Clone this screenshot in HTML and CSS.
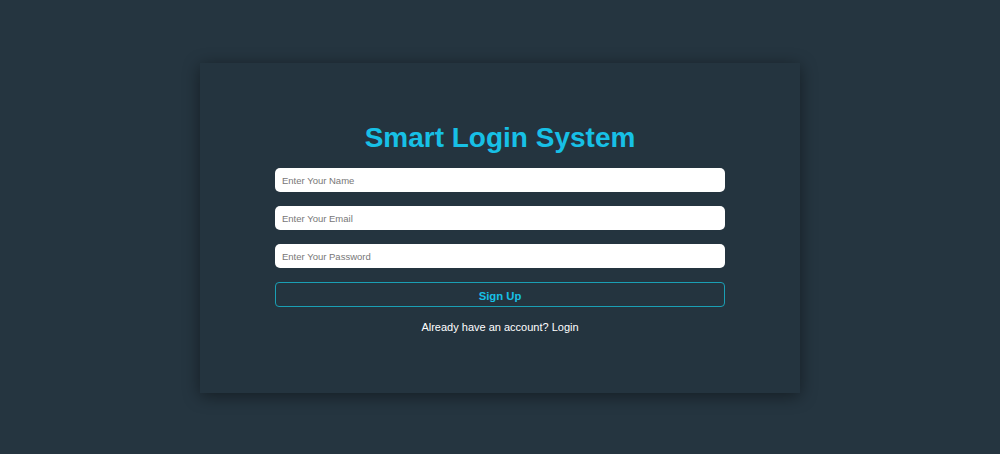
FILE: index.html
```
<!DOCTYPE html>
<html>
<head>
<meta charset="utf-8">
<link rel="stylesheet" href="styles.css">
</head>
<body>
<div class="page">
  <div class="card">
    <div class="form">
      <h1 class="title">Smart Login System</h1>
      <input class="field" type="text" placeholder="Enter Your Name">
      <input class="field" type="email" placeholder="Enter Your Email">
      <input class="field" type="password" placeholder="Enter Your Password">
      <button class="btn">Sign Up</button>
      <p class="note">Already have an account? Login</p>
    </div>
  </div>
</div>
</body>
</html>
```
FILE: styles.css
```
html, body {
  margin: 0;
  padding: 0;
}
body {
  background: #253540;
  font-family: "Liberation Sans", Arial, sans-serif;
}
.page {
  height: 454px;
  display: flex;
  align-items: center;
  justify-content: center;
}
.card {
  width: 600px;
  height: 330px;
  margin-top: 2px;
  background: #24343f;
  box-shadow: 0 3px 16px rgba(0, 0, 0, 0.45);
  display: flex;
  align-items: center;
  justify-content: center;
}
.form {
  width: 450px;
  display: flex;
  flex-direction: column;
}
.title {
  margin: 0 0 13px;
  text-align: center;
  color: #17c0e6;
  font-size: 28px;
  font-weight: bold;
  line-height: 34px;
}
.field {
  box-sizing: border-box;
  height: 24px;
  margin: 0 0 14px;
  padding: 0 7px;
  border: none;
  border-radius: 5px;
  background: #fff;
  font-family: "Liberation Sans", Arial, sans-serif;
  font-size: 9.5px;
  outline: none;
}
.field::placeholder {
  color: #777;
}
.btn {
  height: 25px;
  margin: 0;
  border: 1px solid #1a9fb4;
  border-radius: 4px;
  background: transparent;
  color: #17c0e6;
  font-family: "Liberation Sans", Arial, sans-serif;
  font-size: 11.3px;
  font-weight: bold;
  padding-top: 3px;
}
.note {
  margin: 12px 0 0;
  text-align: center;
  color: #fff;
  font-size: 11px;
  line-height: 16px;
}
```
